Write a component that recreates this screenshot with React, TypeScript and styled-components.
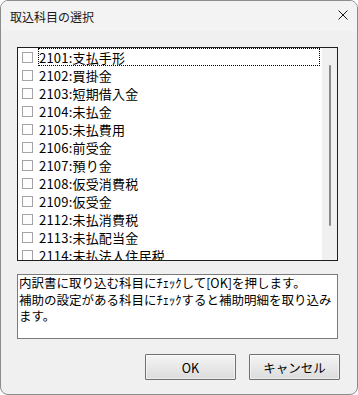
import styled, { createGlobalStyle } from "styled-components";

const accounts = [
  "2101:支払手形",
  "2102:買掛金",
  "2103:短期借入金",
  "2104:未払金",
  "2105:未払費用",
  "2106:前受金",
  "2107:預り金",
  "2108:仮受消費税",
  "2109:仮受金",
  "2112:未払消費税",
  "2113:未払配当金",
  "2114:未払法人住民税",
];

const App = () => {
  return (
    <>
      <GlobalStyle />
      <StWindow>
        <StTitleBar>
          <StTitle>取込科目の選択</StTitle>
          <StClose aria-label="閉じる">
            <svg width="10" height="10" viewBox="0 0 10 10">
              <path d="M0.5 0.5 L9.5 9.5 M9.5 0.5 L0.5 9.5" stroke="#1a1a1a" strokeWidth="1" />
            </svg>
          </StClose>
        </StTitleBar>
        <StBody>
          <StListBox>
            <StItems>
              {accounts.map((name, index) => (
                <StRow key={name}>
                  <StCheck />
                  <StLabel $focused={index === 0}>{name}</StLabel>
                </StRow>
              ))}
            </StItems>
            <StScrollTrack>
              <StThumb />
            </StScrollTrack>
          </StListBox>
          <StNote>
            内訳書に取り込む科目にﾁｪｯｸして[OK]を押します。
            <br />
            補助の設定がある科目にﾁｪｯｸすると補助明細を取り込み
            <br />
            ます。
          </StNote>
          <StButtonRow>
            <StButton>OK</StButton>
            <StButton>キャンセル</StButton>
          </StButtonRow>
        </StBody>
      </StWindow>
    </>
  );
};
export default App;

const GlobalStyle = createGlobalStyle`
  body {
    margin: 0;
    background: #ffffff;
  }
  * {
    box-sizing: border-box;
  }
`;
const StWindow = styled.div`
  width: 358px;
  height: 395px;
  border: 1px solid #8c8c8c;
  border-radius: 8px;
  background: #f0f0f0;
  overflow: hidden;
  display: flex;
  flex-direction: column;
  font-family: "Noto Sans CJK JP", "Liberation Sans", sans-serif;
  color: #000;
`;
const StTitleBar = styled.div`
  height: 30px;
  background: #f3f3f3;
  display: flex;
  align-items: center;
  justify-content: space-between;
  padding: 0 9px;
`;
const StTitle = styled.span`
  font-size: 12px;
  color: #1a1a1a;
`;
const StClose = styled.div`
  width: 10px;
  height: 10px;
  display: flex;
  margin-top: -2px;
`;
const StBody = styled.div`
  padding: 16px 19px 0 16px;
  display: flex;
  flex-direction: column;
`;
const StListBox = styled.div`
  width: 321px;
  height: 214px;
  border: 1px solid #1e1e1e;
  background: #fff;
  display: flex;
  overflow: hidden;
`;
const StItems = styled.div`
  flex: 1;
  display: flex;
  flex-direction: column;
`;
const StRow = styled.div`
  height: 18px;
  flex-shrink: 0;
  display: flex;
  align-items: center;
  padding-left: 4px;
  padding-right: 2px;
`;
const StCheck = styled.span`
  width: 11px;
  height: 11px;
  border: 1px solid #a4a4a4;
  background: #fdfdfd;
  margin-right: 5px;
  flex-shrink: 0;
`;
const StLabel = styled.span<{ $focused?: boolean }>`
  flex: 1;
  height: 18px;
  display: flex;
  align-items: center;
  border: 1px dotted ${(props) => (props.$focused ? "#000" : "transparent")};
  font-size: 13px;
  white-space: nowrap;
  letter-spacing: 0.2px;
`;
const StScrollTrack = styled.div`
  width: 15px;
  background: #f0f0f0;
  display: flex;
  justify-content: center;
  padding-top: 17px;
`;
const StThumb = styled.div`
  width: 2px;
  height: 161px;
  background: #8a8a8a;
  border-radius: 1px;
`;
const StNote = styled.div`
  margin-top: 13px;
  width: 321px;
  height: 65px;
  border: 1px solid #7a7a7a;
  background: #fff;
  padding: 0 0 0 1px;
  font-size: 12.5px;
  line-height: 16.5px;
  white-space: nowrap;
  overflow: hidden;
`;
const StButtonRow = styled.div`
  margin-top: 15px;
  margin-right: -2px;
  display: flex;
  justify-content: flex-end;
  gap: 13px;
`;
const StButton = styled.button`
  width: 91px;
  height: 26px;
  border: 1px solid #707070;
  border-radius: 1px;
  background: linear-gradient(#f4f4f4, #dcdcdc);
  box-shadow: inset 0 0 0 1px rgba(255, 255, 255, 0.5);
  font-family: "Noto Sans CJK JP", "Liberation Sans", sans-serif;
  font-size: 12.5px;
  color: #000;
  padding: 0;
  cursor: pointer;
`;
